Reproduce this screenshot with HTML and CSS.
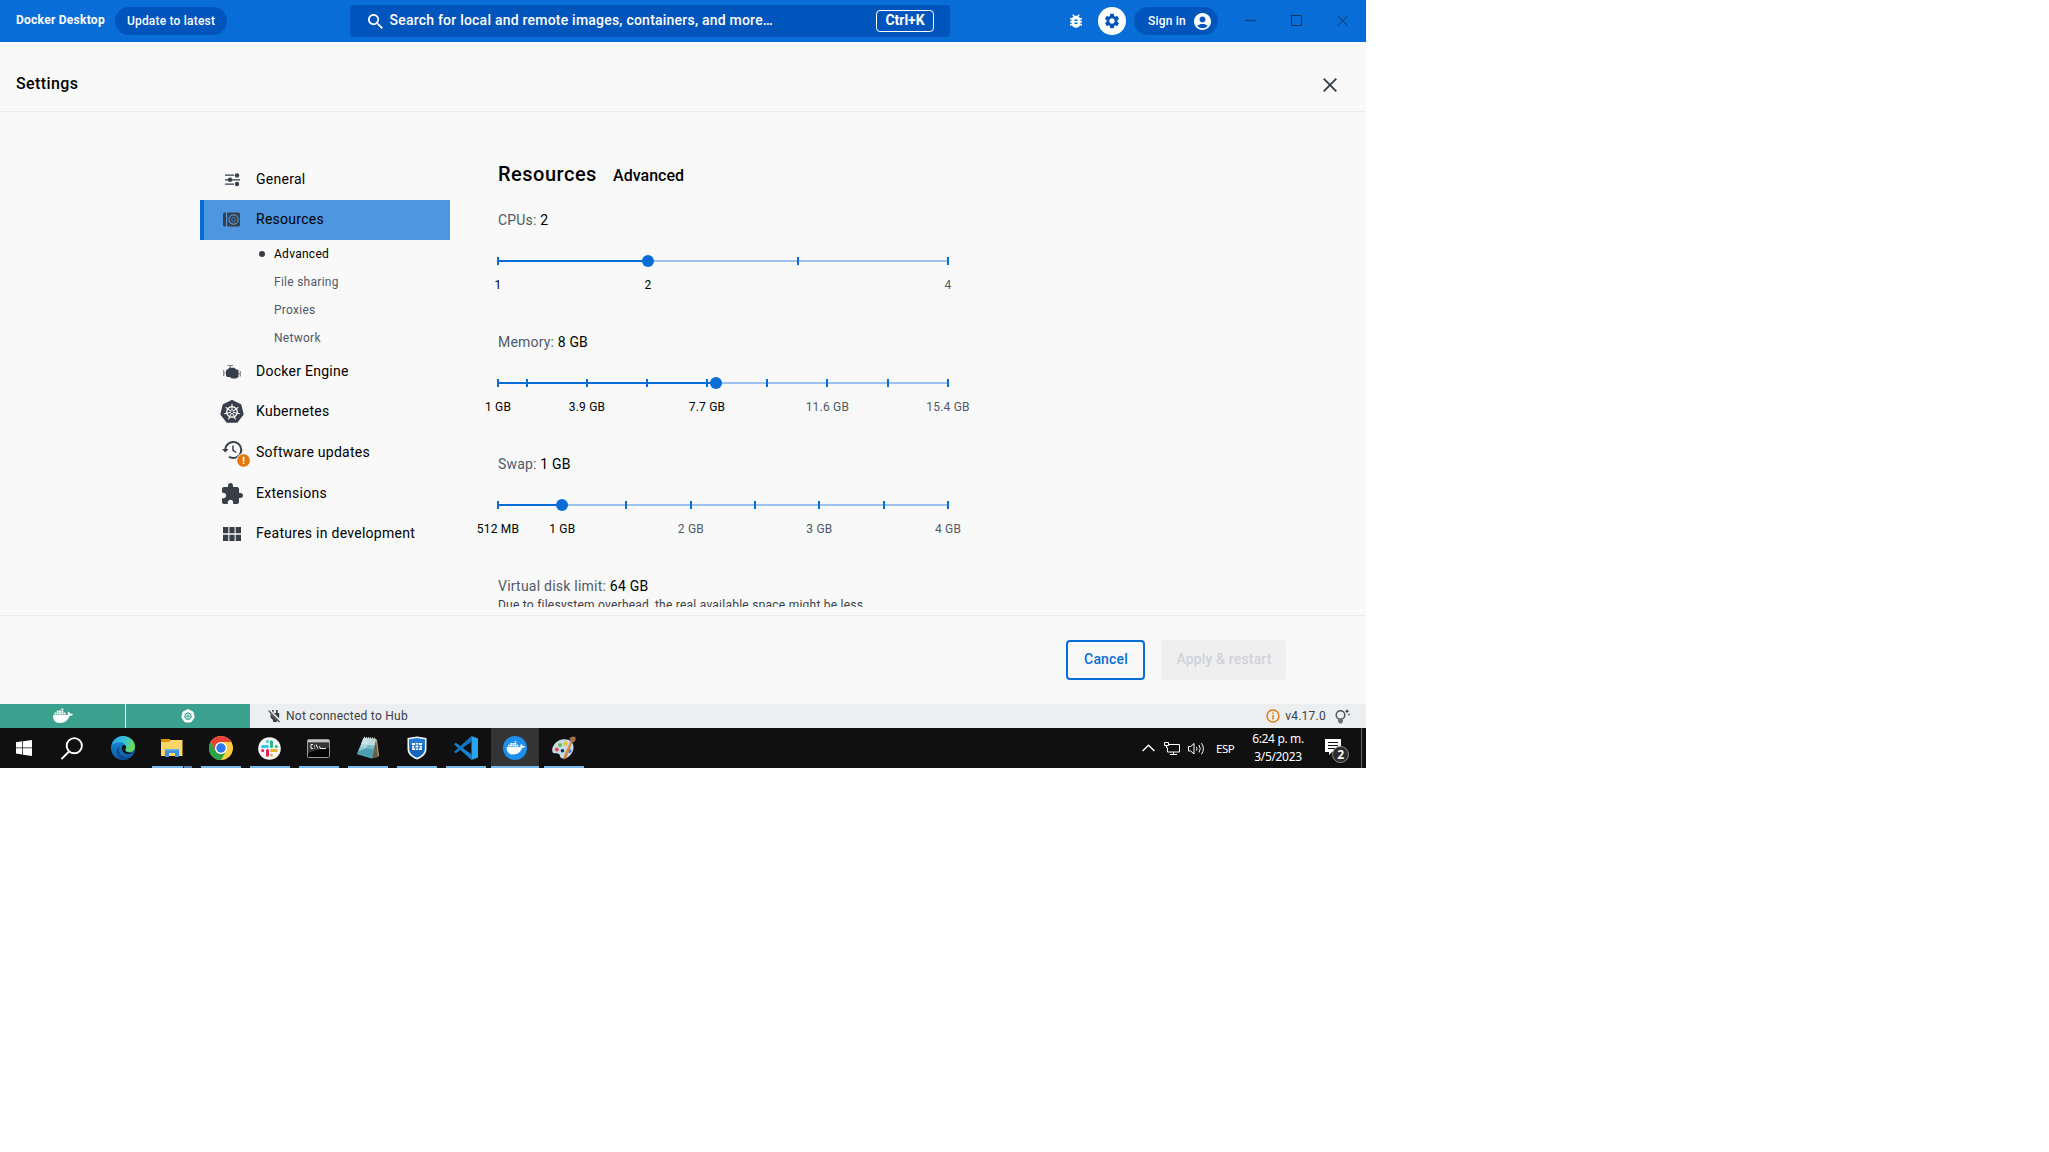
FILE: index.html
```
<!DOCTYPE html>
<html lang="en">
<head>
<meta charset="utf-8">
<title>Docker Desktop</title>
<link rel="stylesheet" href="styles.css">
</head>
<body>
<svg class="defs" width="0" height="0" aria-hidden="true">
  <symbol id="whale" viewBox="0 0 20 14" overflow="visible">
    <path d="M0 6h13.800c.7 0 1.100-.5 1-1.300-.2-1 .2-1.700.8-2.300.8.6 1.200 1.300 1.300 2.200 1-.2 2-.1 3 .6-.6 1.200-1.800 1.700-3.300 1.600C15 11.500 12 14 7 14 2 14-.3 11 0 6z"/>
    <path d="M1.500 3.600h1.900v1.800H1.500zM3.800 3.600h1.900v1.800H3.800zM6.100 3.600H8v1.800H6.100zM8.400 3.600h1.900v1.800H8.400zM10.700 3.600h1.900v1.800h-1.900zM3.800 1.500h1.900v1.700H3.800zM6.100 1.500H8v1.700H6.100zM8.400 1.500h1.900v1.700H8.400zM8.400-.4h1.900v1.500H8.400z"/>
  </symbol>
</svg>

<div class="desktop">
  <header class="titlebar">
    <span class="brand">Docker Desktop</span>
    <button class="pill update">Update to latest</button>
    <div class="search">
      <svg class="search-icon" viewBox="3 3 17.500 17.500"><path d="M15.500 14h-.79l-.28-.27C15.410 12.590 16 11.110 16 9.500 16 5.910 13.090 3 9.500 3S3 5.910 3 9.500 5.910 16 9.500 16c1.610 0 3.090-.59 4.230-1.570l.27.28v.79l5 4.990L20.490 19l-4.990-5zm-6 0C7.010 14 5 11.990 5 9.500S7.010 5 9.500 5 14 7.010 14 9.500 11.990 14 9.500 14z"/></svg>
      <span class="search-text">Search for local and remote images, containers, and more…</span>
      <kbd class="shortcut">Ctrl+K</kbd>
    </div>
    <svg class="bug" viewBox="0 0 24 24"><path d="M20 8h-2.810c-.45-.78-1.070-1.450-1.820-1.960L17 4.410 15.590 3l-2.170 2.170C12.960 5.060 12.490 5 12 5c-.49 0-.96.06-1.410.17L8.410 3 7 4.410l1.620 1.630C7.880 6.550 7.260 7.220 6.810 8H4v2h2.090c-.05.33-.09.66-.09 1v1H4v2h2v1c0 .34.04.67.09 1H4v2h2.810c1.040 1.790 2.970 3 5.190 3s4.150-1.210 5.190-3H20v-2h-2.090c.05-.33.09-.66.09-1v-1h2v-2h-2v-1c0-.34-.04-.67-.09-1H20V8zm-6 8h-4v-2h4v2zm0-4h-4v-2h4v2z"/></svg>
    <span class="gear"><svg viewBox="0 0 24 24"><path d="M19.140 12.940c.04-.3.06-.61.06-.94 0-.32-.02-.64-.07-.94l2.030-1.580c.18-.14.23-.41.12-.61l-1.920-3.320c-.12-.22-.37-.29-.59-.22l-2.390.96c-.5-.38-1.030-.7-1.620-.94l-.36-2.540c-.04-.24-.24-.41-.48-.41h-3.840c-.24 0-.43.17-.47.41l-.36 2.540c-.59.24-1.130.57-1.620.94l-2.390-.96c-.22-.08-.47 0-.59.22L2.740 8.870c-.12.21-.08.47.12.61l2.030 1.580c-.05.3-.09.63-.09.94s.02.64.07.94l-2.030 1.580c-.18.14-.23.41-.12.61l1.920 3.320c.12.22.37.29.59.22l2.390-.96c.5.38 1.030.7 1.620.94l.36 2.540c.05.24.24.41.48.41h3.840c.24 0 .44-.17.47-.41l.36-2.540c.59-.24 1.130-.56 1.620-.94l2.390.96c.22.08.47 0 .59-.22l1.920-3.320c.12-.22.07-.47-.12-.61l-2.010-1.580zM12 15.600c-1.980 0-3.600-1.620-3.600-3.600s1.620-3.600 3.600-3.600 3.600 1.620 3.600 3.600-1.620 3.600-3.600 3.600z"/></svg></span>
    <button class="pill signin"><span>Sign in</span><svg viewBox="2 2 20 20"><path d="M12 2C6.480 2 2 6.480 2 12s4.480 10 10 10 10-4.480 10-10S17.520 2 12 2zm0 4c1.930 0 3.500 1.570 3.500 3.500S13.930 13 12 13s-3.500-1.570-3.500-3.500S10.070 6 12 6zm0 14c-2.030 0-4.430-.82-6.140-2.880C7.550 15.800 9.680 15 12 15s4.450.8 6.140 2.120C16.430 19.180 14.030 20 12 20z"/></svg></button>
    <svg class="win-controls" viewBox="0 0 104 12" fill="none"><path class="win-min" d="M0 5.500h11"/><path d="M46.500.5h10v10h-10zM92.500.5l10.500 10.500M103 .5 92.500 11"/></svg>
  </header>

  <div class="page-head">
    <h1>Settings</h1>
    <svg class="close" viewBox="0 0 14 14"><path d="M.7.7l12.600 12.600M13.300.7.7 13.300"/></svg>
  </div>

  <main class="body">
    <nav class="sidebar">
      <a class="item"><span class="ico"><svg width="16" height="14" viewBox="0 0 16 14"><path d="M1 2.200h9M1 6.800h3M8 6.800h8M1 11.200h9" stroke="#393f49" stroke-width="1.300"/><g fill="#393f49"><circle cx="13" cy="2.400" r="2.200"/><circle cx="6" cy="6.700" r="2.200"/><circle cx="13" cy="11" r="2.200"/></g></svg></span><span class="label">General</span></a>
      <a class="item selected"><span class="ico"><svg width="17" height="15" viewBox="0 0 17 15"><path d="M1.500.5H3v14H1.500Q0 14.500 0 13V2Q0 .5 1.500.5zM4.200 .5h11.300Q17 .5 17 2v11q0 1.500-1.500 1.500H4.200z" fill="#393f49"/><circle cx="10.600" cy="7.500" r="4.600" fill="none" stroke="#4f96e1" stroke-width="1.200"/><circle cx="10.600" cy="7.500" r="1.900" fill="none" stroke="#4880bd" stroke-width="1"/></svg></span><span class="label">Resources</span></a>
      <div class="sub">
        <a class="sub-item active"><i class="dot"></i>Advanced</a>
        <a class="sub-item">File sharing</a>
        <a class="sub-item">Proxies</a>
        <a class="sub-item">Network</a>
      </div>
      <a class="item"><span class="ico"><svg width="18" height="14" viewBox="0 0 18 14"><path d="M4.500.5h5.500M7.200.5v2.500M.7 5v6M.7 8h3M17.300 6v5.500M15 8.700h2" stroke="#7a808a" stroke-width="1.100" fill="none"/><path d="M3.500 4.800 5 4.200 6 2.800h5.500l1.300 1.400 2.700.8v7l-2.500 1.500H9L6.500 12H4L3 10.500V6z" fill="#393f49"/></svg></span><span class="label">Docker Engine</span></a>
      <a class="item"><span class="ico"><svg width="24" height="23" viewBox="0 0 24 23"><path d="M12 .8 20.600 4.900 22.900 14.300 16.900 22H7.100L1.100 14.300 3.400 4.900z" fill="#393f49" stroke="#393f49" stroke-width="1.500" stroke-linejoin="round"/><g fill="none" stroke="#f9f9fa"><circle cx="12" cy="12" r="5.300" stroke-width="1.400"/><path d="M12 11V4M12.800 11.400l5.500-4.200M13 12.300l6.800 1.500M12.500 13l3.100 6.400M11.500 13l-3.100 6.400M11 12.300l-6.800 1.500M11.200 11.400 5.700 7.200" stroke-width="1.100"/></g></svg></span><span class="label">Kubernetes</span></a>
      <a class="item updates"><span class="ico"><svg width="21" height="20" viewBox="0 0 21 20" fill="none" stroke="#393f49" stroke-width="1.900"><path d="M3.300 10A8 8 0 1 1 7 16.700"/><path d="M11 5.500v4.800l3.300 2.200" stroke-width="1.500"/><path d="M0 9h6.600L3.300 12.600z" fill="#393f49" stroke="none"/></svg><svg class="warn" viewBox="0 0 16 16"><circle cx="8" cy="8" r="7.300" fill="#df7a0c" stroke="#fff" stroke-width="1"/><path d="M7.200 4h1.700v5H7.200zM7.200 10.200h1.700v1.600H7.200z" fill="#fff"/></svg></span><span class="label">Software updates</span></a>
      <a class="item"><span class="ico"><svg width="24" height="24" viewBox="0 0 24 24"><path fill="#393f49" d="M20.500 11H19V7c0-1.100-.9-2-2-2h-4V3.500C13 2.120 11.880 1 10.500 1S8 2.120 8 3.500V5H4c-1.100 0-1.990.9-1.990 2v3.800H3.500c1.490 0 2.700 1.210 2.700 2.700s-1.210 2.700-2.700 2.700H2V20c0 1.100.9 2 2 2h3.800v-1.500c0-1.490 1.210-2.700 2.700-2.700 1.490 0 2.700 1.210 2.700 2.700V22H17c1.100 0 2-.9 2-2v-4h1.500c1.380 0 2.500-1.120 2.500-2.500S21.880 11 20.500 11z"/></svg></span><span class="label">Extensions</span></a>
      <a class="item"><span class="ico"><svg width="18" height="14" viewBox="0 0 18 14"><path fill="#393f49" d="M0 0h5.300v6.300H0zM6.400 0h5.200v6.300H6.400zM12.700 0H18v6.300h-5.300zM0 7.700h5.300V14H0zM6.400 7.700h5.200V14H6.400zM12.700 7.700H18V14h-5.300z"/></svg></span><span class="label">Features in development</span></a>
    </nav>

    <section class="panel">
      <h2><span class="title">Resources</span><span class="crumb">Advanced</span></h2>

      <div class="setting">
        <p class="caption">CPUs: <b>2</b></p>
        <div class="slider">
          <div class="fill" style="width:33.330%"></div>
          <i class="tick" style="left:0"></i><i class="tick" style="left:66.670%"></i><i class="tick" style="left:100%"></i>
          <i class="thumb" style="left:33.330%"></i>
          <span class="mark on" style="left:0">1</span><span class="mark on" style="left:33.330%">2</span><span class="mark" style="left:100%">4</span>
        </div>
      </div>

      <div class="setting">
        <p class="caption">Memory: <b>8 GB</b></p>
        <div class="slider">
          <div class="fill" style="width:48.500%"></div>
          <i class="tick" style="left:0"></i><i class="tick" style="left:6.450%"></i><i class="tick" style="left:19.780%"></i><i class="tick" style="left:33.110%"></i><i class="tick" style="left:46.440%"></i><i class="tick" style="left:59.780%"></i><i class="tick" style="left:73.110%"></i><i class="tick" style="left:86.670%"></i><i class="tick" style="left:100%"></i>
          <i class="thumb" style="left:48.440%"></i>
          <span class="mark on" style="left:0">1 GB</span><span class="mark on" style="left:19.780%">3.9 GB</span><span class="mark on" style="left:46.440%">7.7 GB</span><span class="mark" style="left:73.200%">11.6 GB</span><span class="mark" style="left:100%">15.4 GB</span>
        </div>
      </div>

      <div class="setting">
        <p class="caption">Swap: <b>1 GB</b></p>
        <div class="slider">
          <div class="fill" style="width:14.290%"></div>
          <i class="tick" style="left:0"></i><i class="tick" style="left:28.440%"></i><i class="tick" style="left:42.890%"></i><i class="tick" style="left:57.110%"></i><i class="tick" style="left:71.330%"></i><i class="tick" style="left:85.780%"></i><i class="tick" style="left:100%"></i>
          <i class="thumb" style="left:14.220%"></i>
          <span class="mark on" style="left:0">512 MB</span><span class="mark on" style="left:14.290%">1 GB</span><span class="mark" style="left:42.860%">2 GB</span><span class="mark" style="left:71.430%">3 GB</span><span class="mark" style="left:100%">4 GB</span>
        </div>
      </div>

      <div class="setting">
        <p class="caption disk">Virtual disk limit: <b>64 GB</b></p>
        <p class="hint">Due to filesystem overhead, the real available space might be less.</p>
      </div>
    </section>
  </main>

  <footer class="actions">
    <button class="btn cancel">Cancel</button>
    <button class="btn apply" disabled>Apply &amp; restart</button>
  </footer>

  <div class="status">
    <span class="state engine"><svg width="20" height="14" viewBox="0 0 20 14"><use href="#whale" width="20" height="14"/></svg></span>
    <span class="state cluster"><svg width="14" height="14" viewBox="0 0 14 14"><path d="M7 .6 12 3 13.300 8.400 9.800 13H4.200L.7 8.400 2 3z" fill="#fff" stroke="#fff" stroke-linejoin="round"/><g fill="none" stroke="#3ca08e"><circle cx="7" cy="7.200" r="3.200" stroke-width="1"/><path d="M7 2.800v4.400M7 7.200l3.400-2.700M7 7.200l4.300 1M7 7.200l1.900 3.900M7 7.200 5.100 11.100M7 7.200l-4.300 1M7 7.200 3.600 4.500" stroke-width=".7"/></g></svg></span>
    <svg class="plug" width="13" height="14" viewBox="0 0 13 14"><path d="M4 1h1.700v3H8V1h1.700v3h1.500v4.500L9 11v2H5v-2L2.500 8.500V4H4z" fill="#393f49"/><path d="M1 1l11.500 12" stroke="#ecedef" stroke-width="3"/><path d="M.6 1.600 11.500 13" stroke="#393f49" stroke-width="1.200"/></svg>
    <span class="hub">Not connected to Hub</span>
    <svg class="info" viewBox="0 0 14 14"><circle cx="7" cy="7" r="6" fill="none" stroke="#df7a0c" stroke-width="1.400"/><path d="M6.300 3.500h1.400v1.400H6.300zM6.300 6h1.400v4.500H6.300z" fill="#df7a0c"/></svg>
    <span class="version">v4.17.0</span>
    <svg class="bulb" width="16" height="15" viewBox="0 0 16 15"><circle cx="5.500" cy="6" r="4.300" fill="none" stroke="#4b525c" stroke-width="1.500"/><path d="M3 9.500h5v3l-1.300 2H4.300L3 12.500z" fill="#6c737e"/><path d="M12 0l.7 1.600 1.600.6-1.600.7L12 4.500l-.7-1.600-1.300-.7 1.300-.6zM14 4.500l1 1-1 1-1-1z" fill="#393f49"/></svg>
  </div>

  <div class="taskbar">
    <div class="system">
      <svg class="start" width="16" height="16" viewBox="0 0 16 16" fill="#fff"><path d="M0 2.200 6.300 1.300v6.200H0zM7 1.200 16 0v7.500H7zM0 8.300h6.300v6.200L0 13.600zM7 8.300h9V16l-9-1.200z"/></svg>
      <svg class="find" width="23" height="23" viewBox="0 0 23 23" fill="none" stroke="#fff" stroke-width="1.900"><circle cx="13.300" cy="8.700" r="7.600"/><path d="M8 14.500.4 22.200"/></svg>
      <svg class="edge" width="24" height="24" viewBox="0 0 24 24"><defs><linearGradient id="e1" x1="0" y1=".2" x2="1" y2=".5"><stop offset="0" stop-color="#2fa4e4"/><stop offset=".55" stop-color="#38c2d6"/><stop offset="1" stop-color="#6be04b"/></linearGradient><linearGradient id="e2" x1="0" y1="0" x2="0" y2="1"><stop offset="0" stop-color="#1b93dc"/><stop offset="1" stop-color="#0c59a4"/></linearGradient></defs><circle cx="12" cy="12" r="12" fill="url(#e2)"/><path d="M.6 9.500C1.800 4 6.500 0 12 0c7 0 12 5.200 12 10.500 0 3.500-2.500 5.500-5.800 5.500-2.300 0-4.200-1-4.200-2 0-.8 1-1.200 1-3 0-2.600-2.500-4.800-6-4.800-4 0-7 1.500-8.400 3.300z" fill="url(#e1)"/><path d="M8.700 10.500C6.500 14.500 9 21 15 21c3 0 5.500-1 7.300-3C20 22 16.500 24 12 24 8 23 5.500 19 5.800 15c.1-2 1.200-3.700 2.900-4.500z" fill="#114a8b"/><path d="M14.200 13.500c.4-.7.8-1.300.8-2.500 0-1.200-1-2-2.200-2-1.900.3-2.300 2.500-1.800 4.500.8 3 3 4.500 6 4.500 2.400 0 4-.7 5.500-1.800-1.500.5-2.500.6-4 .6-2.300 0-4.300-1.200-4.300-3.300z" fill="#111"/></svg>
    </div>
    <div class="apps">
      <span class="app folder"><svg width="22" height="18" viewBox="0 0 22 18"><path d="M0 0h8.500l1.500 2-1.500 2H0z" fill="#d9940a"/><path d="M0 3h8l1.500-2H21.500v16H0z" fill="#ffd468"/><path d="M4 18v-8h14v8h-4v-4H8v4z" fill="#3f92d8"/><path d="M4 10h14v1.500H4z" fill="#64b4ef"/></svg></span>
      <span class="app"><svg width="24" height="24" viewBox="0 0 24 24"><circle cx="12" cy="12" r="12" fill="#ffcd40"/><path d="M1.600 6A12 12 0 0 1 22.400 6H12a6 6 0 0 0-5.200 9z" fill="#ea4335"/><path d="M1.600 6A12 12 0 0 0 12 24l5.200-9A6 6 0 0 1 6.800 15z" fill="#2ba24c"/><circle cx="12" cy="12" r="6" fill="#fff"/><circle cx="12" cy="12" r="4.700" fill="#2f79ed"/></svg></span>
      <span class="app"><svg width="23" height="23" viewBox="0 0 23 23"><circle cx="11.500" cy="11.500" r="11.300" fill="#f7f7f7"/><g fill="none" stroke-width="3" stroke-linecap="round"><path d="M9.500 4.600v0M4.500 9.500h5" stroke="#36c5f0"/><path d="M13.500 4.700v4.800M18.300 9.500v0" stroke="#2eb67d"/><path d="M13.500 13.600h4.900M13.500 18.200v0" stroke="#ecb22e"/><path d="M9.500 13.600v4.700M4.700 13.600v0" stroke="#e01e5a"/></g></svg></span>
      <span class="app"><svg width="23" height="19" viewBox="0 0 23 19"><rect x=".5" y=".5" width="22" height="18" rx="1" fill="#050505" stroke="#9c9c9c"/><path d="M1 1h21v2.500H1z" fill="#c4c7ca"/><path d="M1 4h21v5Q10 10 1 14z" fill="#343434"/><path d="M6 5.500H4v4h2M7.500 6.500v1M7.500 8.500v1M9 5.500l2 4M12.500 7l1 3M14 9.500h5" stroke="#eee" fill="none" stroke-width="1"/></svg></span>
      <span class="app"><svg width="24" height="24" viewBox="0 0 24 24"><path d="M10 2.500 21 3l1.500 18-6 1.500z" fill="#6e5f42"/><path d="M7.500 2 20 3 16 22.500 1 18z" fill="#79bcc8"/><path d="M7.500 2 20 3 18.500 9.500 5 8z" fill="#bcd9dc"/><path d="M4 11l14 2.500-2 9L1 18z" fill="#4e9fae"/><path d="M7.500 2 2.500 15.500l8-3.500 3-9.500z" fill="#d9eef0" opacity=".5"/><path d="M8 1.500l12 1" stroke="#ddd" stroke-width="1.500" stroke-dasharray="1 1"/><path d="M20.500 4 22.500 20" stroke="#cbbf9f" stroke-width=".8"/></svg></span>
      <span class="app"><svg width="20" height="24" viewBox="0 0 20 24"><path d="M10 .5 19.500 2v11c0 5-4 8.500-9.500 10.500C4.500 21.500.5 18 .5 13V2z" fill="#f0f7fc"/><path d="M10 2.200 17.800 3.500V13c0 4-3.300 7-7.800 8.800C5.500 20 2.200 17 2.200 13V3.500z" fill="#1565bc"/><path d="M10 2.200 17.800 3.500V9H2.200V3.500z" fill="#1f7bd3"/><path d="M5 9V7h3v2zM8.700 7h2.600v1.500H8.700zM12 7h3v2h-3zM5 9.700h2.300v2H5zM8.500 9.500h3v2h-3zM12.700 9.700H15v2h-2.300zM5 12.300h3V14H5zM8.700 12.500h2.600V14H8.700zM12 12.300h3V14h-3z" fill="#fff"/></svg></span>
      <span class="app"><svg width="24" height="24" viewBox="0 0 24 24"><path d="M0 8.200 1.800 6.800 17.500 18.500V24z" fill="#1684ce"/><path d="M0 15.800 1.800 17.200 17.500 5.500V0z" fill="#0f75bd"/><path d="M17.500 0 24 2.600v18.800L17.500 24z" fill="#29a4f0"/></svg></span>
      <span class="app current"><svg width="24" height="24" viewBox="0 0 24 24"><circle cx="12" cy="12" r="12" fill="#1d8fec"/><svg x="3.500" y="5.500" width="19" height="13" viewBox="0 0 20 14" fill="#fff"><use href="#whale" width="20" height="14"/></svg></svg></span>
      <span class="app"><svg width="24" height="24" viewBox="0 0 24 24"><path d="M10 3.500c7-1 12 2.500 11.500 8.500-.5 5.500-5 10.500-10.500 10.500-3.500 0-2.500-3-4-4.500-2-1-5 .5-6.500-2C-1 11 4 4.500 10 3.500z" fill="#c5dbea"/><circle cx="4.800" cy="13.500" r="2" fill="#e24b3f"/><circle cx="8" cy="9" r="2" fill="#6cb749"/><circle cx="13.500" cy="7.500" r="2.200" fill="#efc22f"/><circle cx="10.500" cy="14.700" r="1.800" fill="#15324d"/><circle cx="17.500" cy="15" r="2" fill="#3d82d4"/><path d="M18.500 5.500l1.700.8L14.500 22l-3 1.500.5-4z" fill="#d98a3c"/><path d="M19 6.500 17.500 2l3-1.500 3 .5v3.500L21 6.500z" fill="#a9704a"/></svg></span>
    </div>
    <div class="tray">
      <svg class="chev" width="13" height="8" viewBox="0 0 13 8"><path d="M.6 7 6.500 1.200 12.400 7" fill="none" stroke="#fff" stroke-width="1.300"/></svg>
      <svg class="net" width="16" height="13" viewBox="0 0 16 13" fill="none" stroke="#fff"><path d="M5 2.500h10.500v7.500H3.500V5.500M6 12.500h7M9.500 10v2.500M.5.500h4v3h-4zM2.500 3.500V6"/></svg>
      <svg class="vol" width="17" height="13" viewBox="0 0 17 13" fill="none" stroke="#fff"><path d="M.5 4.500h2.200L6 1.500v10.500L2.700 9H.5zM8.500 5q1 1.700 0 3.500M11 3q2.500 3.700 0 7.500M13.500 1.200q3.800 5.500 0 11"/></svg>
      <span class="lang">ESP</span>
      <span class="clock"><span>6:24 p. m.</span><span>3/5/2023</span></span>
      <svg class="notice" width="25" height="25" viewBox="0 0 25 25"><path d="M0 0h16v13H7l-3 3v-3H0z" fill="#fff"/><path d="M3 3.500h10M3 6.500h10M3 9.500h7" stroke="#111"/><circle cx="15.500" cy="15.500" r="8" fill="#2b2b2b" stroke="#8d8d8d"/><text x="15.500" y="19.500" text-anchor="middle">2</text></svg>
      <i class="peek"></i>
    </div>
  </div>
</div>
</body>
</html>
```
FILE: styles.css
```
* { box-sizing: border-box; }
body { margin: 0; background: #fff; font-family: Roboto, "Liberation Sans", sans-serif; }
h1, h2, p { margin: 0; font-weight: 500; }
svg { display: block; flex: none; overflow: visible; }
button { font-family: inherit; border: 0; padding: 0; }
.defs { position: absolute; }
.desktop { width: 1366px; height: 768px; display: flex; flex-direction: column; background: #f9f9fa; color: #000; white-space: nowrap; }

/* Title bar */
.titlebar { height: 42px; flex: none; display: flex; align-items: center; background: #086dd7; color: #fff; padding-left: 16px; }
.brand { width: 99px; font-size: 12px; font-weight: 700; letter-spacing: .26px; line-height: 16px; margin-bottom: 2px; }
.pill { height: 28px; border-radius: 14px; background: #0055bc; color: #fff; font-size: 12px; font-weight: 500; letter-spacing: .2px; }
.update { width: 112px; }
.search { width: 600px; height: 32px; margin-left: 123px; padding: 0 16px 0 18px; border-radius: 4px; background: #0055bc; display: flex; align-items: center; }
.search-icon { width: 15px; height: 15px; fill: #fff; }
.search-text { flex: 1; margin: 0 0 2px 6.500px; font-size: 14px; font-weight: 500; letter-spacing: .22px; }
.shortcut { width: 58px; height: 22px; border: 1px solid #fff; border-radius: 4px; font: 700 14px/19px Roboto, sans-serif; letter-spacing: -.02px; text-align: center; }
.bug { width: 18px; height: 18px; margin-left: 117px; fill: #fff; }
.gear { width: 28px; height: 28px; margin-left: 13px; border-radius: 50%; background: #fff; display: flex; align-items: center; justify-content: center; }
.gear svg { width: 18px; height: 18px; fill: #0055bc; }
.signin { width: 84px; margin-left: 8px; padding: 0 7.500px 0 14px; display: flex; align-items: center; justify-content: space-between; }
.signin svg { width: 17px; height: 17px; fill: #fff; }
.win-controls { width: 104px; height: 12px; margin-left: 27px; stroke: #16365c; stroke-width: 1; }
.win-min { stroke-width: 1.500px; opacity: .7; }

/* Settings header */
.page-head { height: 70px; flex: none; padding: 0 29px 0 16px; border-bottom: 1px solid #e9eaec; display: flex; align-items: flex-start; justify-content: space-between; }
h1 { font-size: 16px; line-height: 20px; letter-spacing: .4px; margin-top: 32px; }
.close { width: 14px; height: 14px; margin-top: 36px; stroke: #393f49; stroke-width: 1.900; }

/* Body */
.body { height: 503px; flex: none; display: flex; padding: 48px 0 8px 200px; }
.sidebar { width: 250px; display: flex; flex-direction: column; }
.item { height: 40px; flex: none; display: flex; align-items: center; font-size: 14px; letter-spacing: .27px; }
.ico { width: 24px; height: 24px; margin: -1px 12px 0 20px; display: flex; align-items: center; justify-content: center; position: relative; }
.label { line-height: 20px; margin-top: -2px; }
.selected { background: #4f96e1; border-left: 4px solid #086dd7; }
.selected .ico { margin-left: 15px; margin-right: 13px; }
.updates { height: 42px; }
.updates .ico svg:first-child { margin-top: -5px; }
.warn { position: absolute; left: 16px; top: 12px; width: 15px; height: 15px; }
.sub { padding-left: 57px; }
.sub-item { height: 28px; display: flex; align-items: center; padding-left: 17px; position: relative; font-size: 12px; letter-spacing: .27px; color: #505968; }
.sub-item.active { color: #000; }
.dot { position: absolute; left: 2px; top: 11px; width: 6px; height: 6px; border-radius: 50%; background: #393f49; }

.panel { width: 520px; height: 447px; overflow: hidden; padding: 0 22px; margin-left: 26px; }
h2 { height: 38px; display: flex; align-items: baseline; }
.title { font-size: 20px; line-height: 28px; letter-spacing: .5px; width: 115px; }
.crumb { font-size: 16px; letter-spacing: .02px; }
.setting { height: 122px; padding-top: 12px; }
.caption { font-size: 14px; line-height: 20px; font-weight: 400; letter-spacing: .18px; color: #505968; }
.caption.disk { letter-spacing: .23px; }
.caption b { font-weight: 400; color: #000; }
.hint { margin-top: 1px; font-size: 12px; line-height: 16px; font-weight: 400; letter-spacing: .24px; color: #393f49; }
.slider { position: relative; width: 450px; height: 2px; margin-top: 30px; background: #9dc2ef; }
.fill { height: 2px; background: #086dd7; }
.tick, .thumb { position: absolute; background: #086dd7; }
.tick { top: -3px; width: 2px; height: 8px; margin-left: -1px; }
.thumb { top: -5px; width: 12px; height: 12px; margin-left: -6px; border-radius: 50%; }
.mark { position: absolute; top: 17px; transform: translateX(-50%); font-size: 12px; line-height: 16px; letter-spacing: .2px; color: #505968; }
.mark.on { color: #000; }

/* Footer buttons */
.actions { height: 89px; flex: none; border-top: 1px solid #e9eaec; padding: 24px 80px 0 0; display: flex; justify-content: flex-end; gap: 16px; }
.btn { height: 40px; border-radius: 4px; font-size: 14px; font-weight: 500; letter-spacing: .15px; padding-bottom: 2px; }
.cancel { width: 79px; border: 2px solid #086dd7; background: #f9f9fa; color: #086dd7; padding-left: 1px; }
.apply { width: 125px; background: #efeff0; color: #d0d3da; padding-left: 1px; }

/* Status bar */
.status { height: 24px; flex: none; display: flex; align-items: center; background: #edeef0; font-size: 12px; letter-spacing: .25px; color: #393f49; padding-right: 15px; }
.state { height: 24px; display: flex; align-items: center; justify-content: center; background: #3ca08e; fill: #fff; }
.engine { width: 126px; border-right: 1px solid #fff; }
.cluster { width: 124px; }
.plug { margin: 0 5px 0 18px; }
.hub { flex: 1; }
.info { width: 14px; height: 14px; margin-right: 5px; }
.bulb { margin-left: 9px; }

/* Windows taskbar */
.taskbar { height: 40px; flex: none; display: flex; background: #101010; color: #fff; font-family: "Noto Sans", "Open Sans", sans-serif; }
.system { width: 148px; display: flex; align-items: center; padding-left: 16px; }
.find { margin-left: 29px; }
.edge { margin-left: 27px; }
.apps { display: flex; flex: 1; }
.app { width: 49px; padding-right: 2px; display: flex; align-items: center; justify-content: center; background: linear-gradient(#76b9ed, #76b9ed) 4px 100% / 40px 2px no-repeat; }
.folder { background-image: linear-gradient(90deg, #76b9ed 31px, #111 31px 32px, #5787b0 32px); }
.current { width: 48px; padding: 0; margin-right: 1px; background: linear-gradient(#76b9ed, #76b9ed) center bottom / 100% 2px no-repeat #343434; }
.tray { display: flex; align-items: center; font-size: 12px; letter-spacing: -.35px; }
.net { margin-left: 9px; }
.vol { margin-left: 8px; }
.lang { width: 20px; margin-left: 11px; font-size: 11.500px; letter-spacing: -.5px; }
.clock { width: 60px; margin-left: 12px; display: flex; flex-direction: column; text-align: center; line-height: 18px; }
.notice { margin: 6px 0 0 17px; font: 700 12px "Noto Sans", sans-serif; }
.notice text { fill: #fff; }
.peek { width: 1px; height: 40px; margin: 0 4px 0 11px; background: #6a6a6a; }
```
